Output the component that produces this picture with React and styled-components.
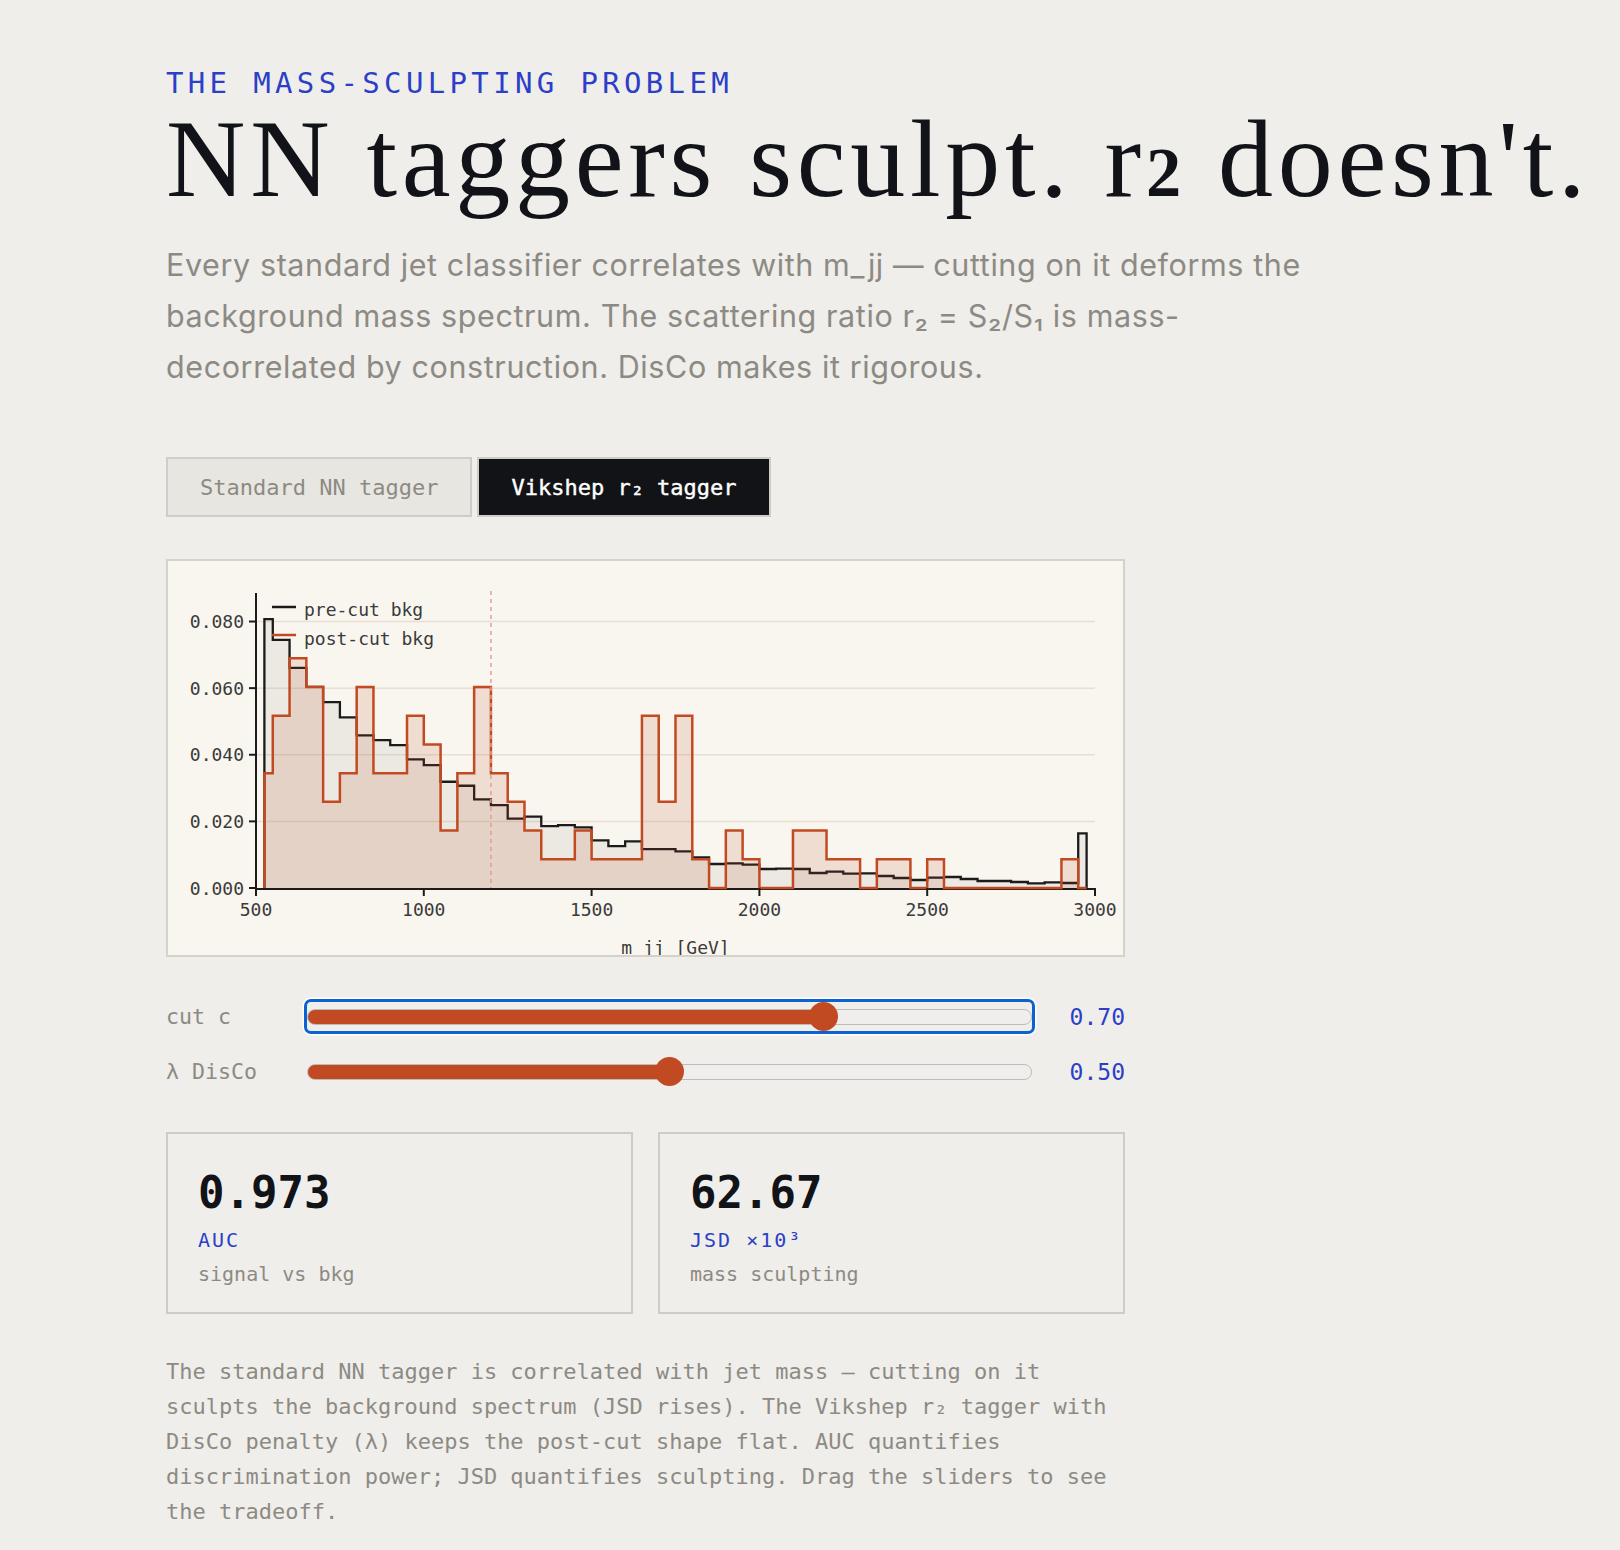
import React, { useState } from 'react';
import styled, { createGlobalStyle } from 'styled-components';

const MONO = `"DejaVu Sans Mono", "Liberation Mono", monospace`;
const INK = '#111318';
const MUTED = '#8d8a84';
const BLUE = '#2b3fc7';
const RUST = '#c24a22';

const GlobalStyle = createGlobalStyle`
  html, body {
    margin: 0;
    padding: 0;
    background: #efeeea;
  }
  body {
    font-family: Inter, "Noto Sans", sans-serif;
    -webkit-font-smoothing: antialiased;
  }
`;

const Page = styled.main`
  max-width: 1288px;
  margin: 0 auto;
  padding: 69px 0 60px;
`;

const Eyebrow = styled.div`
  font-family: ${MONO};
  font-size: 29px;
  line-height: 29px;
  letter-spacing: 0.15em;
  color: ${BLUE};
`;

const Title = styled.h1`
  margin: 6px 0 0;
  font-family: "Liberation Serif", serif;
  font-weight: 400;
  font-size: 110px;
  line-height: 110px;
  letter-spacing: 4.7px;
  color: ${INK};
  white-space: nowrap;
`;

const TitleDigit = styled.span`
  font-size: 0.64em;
  line-height: 1;
  font-weight: 700;
`;

const Lead = styled.p`
  margin: 25px 0 0;
  max-width: 1160px;
  font-size: 30.5px;
  line-height: 51px;
  letter-spacing: 0.6px;
  color: ${MUTED};
`;

const Tabs = styled.div`
  display: flex;
  gap: 5px;
  margin-top: 65px;
`;

const Tab = styled.button`
  box-sizing: border-box;
  height: 60px;
  padding: 0 32px;
  border: 2px solid #d0cdc6;
  border-radius: 0;
  background: ${p => (p.$active ? '#121317' : '#e8e6e1')};
  color: ${p => (p.$active ? '#ffffff' : MUTED)};
  font-family: ${MONO};
  font-size: 22px;
  font-weight: 400;
  -webkit-text-stroke: ${p => (p.$active ? '0.4px #ffffff' : '0')};
  cursor: pointer;
`;

const Lab = styled.section`
  width: 959px;
  margin-top: 42px;
`;

const ChartCard = styled.div`
  height: 398px;
  box-sizing: border-box;
  border: 2px solid #d5d2cb;
  background: #f9f6ef;
  overflow: hidden;

  svg {
    display: block;
  }
`;

const Controls = styled.div`
  margin-top: 45px;
  display: grid;
  row-gap: 26px;
`;

const ControlRow = styled.label`
  display: grid;
  grid-template-columns: 141px 1fr 93px;
  align-items: center;
`;

const ControlName = styled.span`
  font-family: ${MONO};
  font-size: 21.6px;
  color: ${MUTED};
`;

const ControlValue = styled.span`
  font-family: ${MONO};
  font-size: 23px;
  color: ${BLUE};
  text-align: right;
`;

const Range = styled.input.attrs({ type: 'range' })`
  -webkit-appearance: none;
  appearance: none;
  display: block;
  width: 100%;
  height: 29px;
  margin: 0;
  background: transparent;
  border-radius: 4px;
  outline: ${p => (p.$ring ? '3.5px solid #0b62d1' : 'none')};
  outline-offset: 0;
  box-shadow: ${p => (p.$ring ? '0 0 0 4.5px #ffffff' : 'none')};
  cursor: pointer;

  &:focus {
    outline: ${p => (p.$ring ? '3.5px solid #0b62d1' : 'none')};
  }

  &::-webkit-slider-runnable-track {
    box-sizing: border-box;
    height: 16px;
    border: 1.5px solid #bdbcba;
    border-radius: 8px;
    background: linear-gradient(
      to right,
      ${RUST} calc(14.5px + (100% - 29px) * var(--frac)),
      #efeeec 0
    );
  }

  &::-webkit-slider-thumb {
    -webkit-appearance: none;
    width: 29px;
    height: 29px;
    margin-top: -8px;
    border: none;
    border-radius: 50%;
    background: ${RUST};
  }
`;

const Metrics = styled.div`
  margin-top: 46px;
  display: grid;
  grid-template-columns: 1fr 1fr;
  gap: 25px;
`;

const MetricCard = styled.div`
  border: 2px solid #cfccc5;
  padding: 36px 30px 24px;
`;

const MetricValue = styled.div`
  font-family: ${MONO};
  font-weight: 700;
  font-size: 44px;
  line-height: 46px;
  color: ${INK};
`;

const MetricLabel = styled.div`
  margin-top: 10px;
  font-family: ${MONO};
  font-size: 20px;
  line-height: 28px;
  letter-spacing: 0.1em;
  color: ${BLUE};
`;

const MetricNote = styled.div`
  margin-top: 6px;
  font-family: ${MONO};
  font-size: 20px;
  line-height: 28px;
  color: ${MUTED};
`;

const Note = styled.p`
  margin: 40px 0 0;
  font-family: ${MONO};
  font-size: 22px;
  line-height: 35px;
  color: ${MUTED};
`;

// pre-cut background, fraction per 50 GeV bin (500..3000)
const PRE = [
  80.7, 74.5, 66.1, 60.4, 55.8, 51.2, 45.8, 44.4, 42.9, 38.6,
  36.9, 31.9, 30.7, 26.6, 24.9, 20.8, 21.4, 18.6, 18.9, 18.2,
  14.3, 12.6, 14.0, 11.7, 11.7, 11.0, 9.2, 7.2, 7.4, 7.0,
  5.7, 5.8, 5.7, 4.5, 4.9, 4.3, 4.4, 3.6, 3.0, 2.4,
  3.1, 3.3, 2.7, 2.1, 2.1, 1.8, 1.4, 1.7, 1.5, 16.4,
].map(v => v / 1000);

// post-cut background, raw counts (116 events survive)
const POST = [
  4, 6, 8, 7, 3, 4, 7, 4, 4, 6,
  5, 2, 4, 7, 4, 3, 2, 1, 1, 2,
  1, 1, 1, 6, 3, 6, 1, 0, 2, 1,
  0, 0, 2, 2, 1, 1, 0, 1, 1, 0,
  1, 0, 0, 0, 0, 0, 0, 0, 1, 0,
].map(c => c / 116);

const W = 955;
const H = 394;
const X0 = 88;
const X1 = 927;
const Y0 = 327;
const YTOP = 32;
const xs = m => X0 + ((m - 500) * (X1 - X0)) / 2500;
const ys = v => Y0 - v * 3331;

function stepPath(vals) {
  const n = vals.length;
  let d = `M${xs(525)},${Y0}`;
  vals.forEach((v, i) => {
    const left = i === 0 ? 525 : 500 + 50 * i;
    const right = i === n - 1 ? 2975 : 550 + 50 * i;
    d += ` L${xs(left)},${ys(v)} L${xs(right)},${ys(v)}`;
  });
  return d + ` L${xs(2975)},${Y0}`;
}

function MassChart({ cutMass }) {
  const yTicks = [0, 0.02, 0.04, 0.06, 0.08];
  const xTicks = [500, 1000, 1500, 2000, 2500, 3000];
  const pre = stepPath(PRE);
  const post = stepPath(POST);
  return (
    <svg width={W} height={H} viewBox={`0 0 ${W} ${H}`}>
      <g stroke="#e8dfd4" strokeWidth="1.5">
        {yTicks.slice(1).map(t => (
          <line key={t} x1={X0} x2={X1} y1={ys(t)} y2={ys(t)} />
        ))}
      </g>

      <path d={pre + ' Z'} fill="rgba(20,20,20,0.055)" />
      <path d={pre} fill="none" stroke="#1b1b1b" strokeWidth="2.3" />
      <path d={post + ' Z'} fill="rgba(194,74,34,0.14)" />

      <line x1={X0} x2={X1} y1={Y0 + 1} y2={Y0 + 1} stroke="#1b1b1b" strokeWidth="2" />
      <path d={post} fill="none" stroke={RUST} strokeWidth="2.5" />

      <line
        x1={xs(cutMass)}
        x2={xs(cutMass)}
        y1={30}
        y2={Y0}
        stroke="#e3a090"
        strokeWidth="1.5"
        strokeDasharray="4 4"
      />

      <g stroke="#1b1b1b" strokeWidth="2">
        <line x1={X0} x2={X0} y1={YTOP} y2={Y0 + 2} />
        {yTicks.map(t => (
          <line key={t} x1={X0 - 7} x2={X0} y1={ys(t)} y2={ys(t)} />
        ))}
        {xTicks.map(t => (
          <line key={t} x1={xs(t)} x2={xs(t)} y1={Y0} y2={Y0 + 8} />
        ))}
      </g>

      <g fontFamily={MONO} fontSize="18" fill="#3a3a3a">
        {yTicks.map(t => (
          <text key={t} x={76} y={ys(t) + 6.5} textAnchor="end">
            {t.toFixed(3)}
          </text>
        ))}
        {xTicks.map(t => (
          <text key={t} x={xs(t)} y={355} textAnchor="middle">
            {t}
          </text>
        ))}
        <text x={(X0 + X1) / 2} y={393} textAnchor="middle">
          m_jj [GeV]
        </text>

        <line x1={104} x2={128} y1={46} y2={46} stroke="#1b1b1b" strokeWidth="2.5" />
        <text x={136} y={55.3}>pre-cut bkg</text>
        <line x1={104} x2={128} y1={74} y2={74} stroke={RUST} strokeWidth="2.5" />
        <text x={136} y={83.7}>post-cut bkg</text>
      </g>
    </svg>
  );
}

function Slider({ name, value, min, max, onChange, ring }) {
  const frac = (value - min) / (max - min);
  return (
    <ControlRow>
      <ControlName>{name}</ControlName>
      <Range
        min={min}
        max={max}
        step={0.01}
        value={value}
        $ring={ring}
        style={{ '--frac': frac }}
        onChange={e => onChange(parseFloat(e.target.value))}
      />
      <ControlValue>{value.toFixed(2)}</ControlValue>
    </ControlRow>
  );
}

export default function App() {
  const [tagger, setTagger] = useState('r2');
  const [cut, setCut] = useState(0.7);
  const [lambda, setLambda] = useState(0.5);

  return (
    <>
      <GlobalStyle />
      <Page>
        <Eyebrow>THE MASS-SCULPTING PROBLEM</Eyebrow>
        <Title>
          NN taggers sculpt. r<TitleDigit>2</TitleDigit> doesn't.
        </Title>
        <Lead>
          Every standard jet classifier correlates with m_jj — cutting on it deforms the
          background mass spectrum. The scattering ratio r₂ = S₂/S₁ is mass-decorrelated
          by construction. DisCo makes it rigorous.
        </Lead>

        <Tabs>
          <Tab $active={tagger === 'nn'} onClick={() => setTagger('nn')}>
            Standard NN tagger
          </Tab>
          <Tab $active={tagger === 'r2'} onClick={() => setTagger('r2')}>
            Vikshep r₂ tagger
          </Tab>
        </Tabs>

        <Lab>
          <ChartCard>
            <MassChart cutMass={1200} />
          </ChartCard>

          <Controls>
            <Slider name="cut c" value={cut} min={0.05} max={0.95} onChange={setCut} ring />
            <Slider name="λ DisCo" value={lambda} min={0} max={1} onChange={setLambda} />
          </Controls>

          <Metrics>
            <MetricCard>
              <MetricValue>0.973</MetricValue>
              <MetricLabel>AUC</MetricLabel>
              <MetricNote>signal vs bkg</MetricNote>
            </MetricCard>
            <MetricCard>
              <MetricValue>62.67</MetricValue>
              <MetricLabel>JSD ×10³</MetricLabel>
              <MetricNote>mass sculpting</MetricNote>
            </MetricCard>
          </Metrics>

          <Note>
            The standard NN tagger is correlated with jet mass — cutting on it sculpts the
            background spectrum (JSD rises). The Vikshep r₂ tagger with DisCo penalty (λ)
            keeps the post-cut shape flat. AUC quantifies discrimination power; JSD
            quantifies sculpting. Drag the sliders to see the tradeoff.
          </Note>
        </Lab>
      </Page>
    </>
  );
}
